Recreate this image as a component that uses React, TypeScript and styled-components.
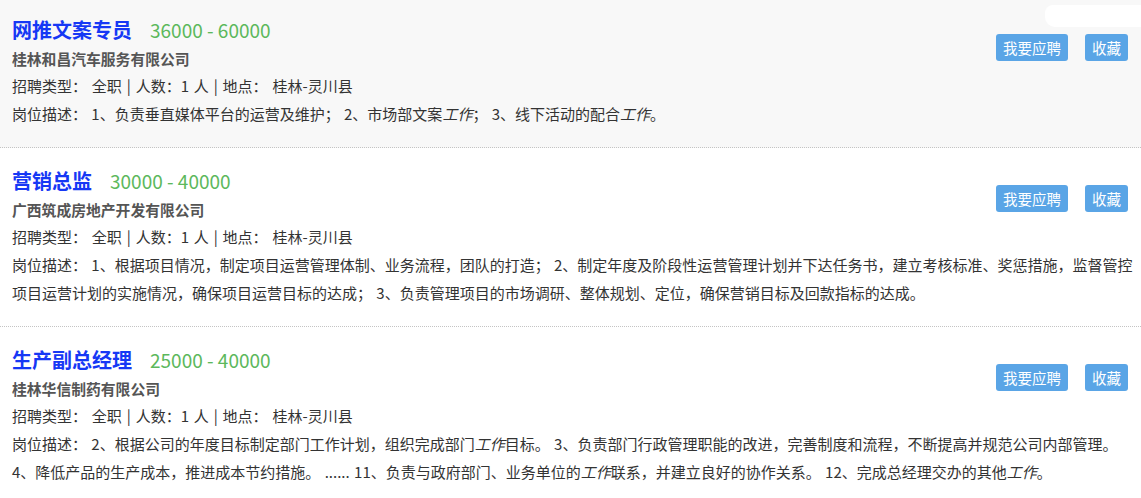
import styled, { createGlobalStyle } from "styled-components";

const GlobalStyle = createGlobalStyle`
  html, body {
    margin: 0;
    padding: 0;
    background: #ffffff;
    font-family: "Noto Sans CJK SC", "Noto Sans", sans-serif;
    color: #333;
    overflow: hidden;
  }
`;

const Page = styled.div`
  position: relative;
  width: 1141px;
  margin-top: -3px;
`;

const Card = styled.div<{ active?: boolean }>`
  display: grid;
  grid-template-columns: 1fr auto;
  padding: 18px 5px 19px 12px;
  background-color: ${(props) => (props.active ? "#f8f8f8" : "#ffffff")};
  border-bottom: 1px dotted #c4c4c4;
`;

const Head = styled.div`
  display: flex;
  flex-direction: column;
  min-width: 0;
`;

const TitleRow = styled.div`
  display: flex;
  align-items: baseline;
  gap: 18px;
  height: 30px;
  line-height: 30px;
`;

const Title = styled.span`
  font-size: 20px;
  font-weight: 700;
  color: #1638f5;
`;

const Salary = styled.span`
  font-size: 19px;
  color: #5cb85c;
`;

const Company = styled.div`
  font-size: 14.8px;
  font-weight: 700;
  color: #555;
  line-height: 28px;
`;

const Meta = styled.div`
  font-size: 15px;
  line-height: 26px;
  word-spacing: 1.5px;
  color: #333;
`;

const Desc = styled.div`
  grid-column: 1 / -1;
  margin-top: 1px;
  font-size: 15px;
  line-height: 28px;
  word-spacing: 1px;
  color: #333;
  em {
    font-style: italic;
  }
`;

const Actions = styled.div`
  display: flex;
  align-items: flex-start;
  gap: 17px;
  margin-top: 19px;
  margin-right: 8px;
`;

const Button = styled.button`
  height: 27px;
  padding: 0 7px;
  border: none;
  border-radius: 3px;
  background-color: #5aa5e6;
  color: #fff;
  font-family: "Noto Sans CJK SC", sans-serif;
  font-size: 14.5px;
  line-height: 27px;
  cursor: pointer;
`;

const Blob = styled.div`
  position: absolute;
  top: 8px;
  right: 0;
  width: 96px;
  height: 22px;
  background: #ffffff;
  border-radius: 8px 0 0 10px;
`;

interface IJob {
  title: string;
  salary: string;
  company: string;
  desc: React.ReactNode;
}

const jobs: IJob[] = [
  {
    title: "网推文案专员",
    salary: "36000 - 60000",
    company: "桂林和昌汽车服务有限公司",
    desc: (
      <>
        岗位描述： 1、负责垂直媒体平台的运营及维护； 2、市场部文案<em>工作</em>； 3、线下活动的配合<em>工作</em>。
      </>
    ),
  },
  {
    title: "营销总监",
    salary: "30000 - 40000",
    company: "广西筑成房地产开发有限公司",
    desc: (
      <>
        岗位描述： 1、根据项目情况，制定项目运营管理体制、业务流程，团队的打造； 2、制定年度及阶段性运营管理计划并下达任务书，建立考核标准、奖惩措施，监督管控项目运营计划的实施情况，确保项目运营目标的达成； 3、负责管理项目的市场调研、整体规划、定位，确保营销目标及回款指标的达成。
      </>
    ),
  },
  {
    title: "生产副总经理",
    salary: "25000 - 40000",
    company: "桂林华信制药有限公司",
    desc: (
      <>
        岗位描述： 2、根据公司的年度目标制定部门工作计划，组织完成部门<em>工作</em>目标。 3、负责部门行政管理职能的改进，完善制度和流程，不断提高并规范公司内部管理。 4、降低产品的生产成本，推进成本节约措施。 ...... 11、负责与政府部门、业务单位的<em>工作</em>联系，并建立良好的协作关系。 12、完成总经理交办的其他<em>工作</em>。
      </>
    ),
  },
];

function App() {
  return (
    <>
      <GlobalStyle />
      <Page>
        {jobs.map((job, i) => (
          <Card key={job.title} active={i === 0}>
            <Head>
              <TitleRow>
                <Title>{job.title}</Title>
                <Salary>{job.salary}</Salary>
              </TitleRow>
              <Company>{job.company}</Company>
              <Meta>招聘类型： 全职 | 人数：1 人 | 地点： 桂林-灵川县</Meta>
            </Head>
            <Actions>
              <Button>我要应聘</Button>
              <Button>收藏</Button>
            </Actions>
            <Desc>{job.desc}</Desc>
          </Card>
        ))}
        <Blob />
      </Page>
    </>
  );
}

export default App;
